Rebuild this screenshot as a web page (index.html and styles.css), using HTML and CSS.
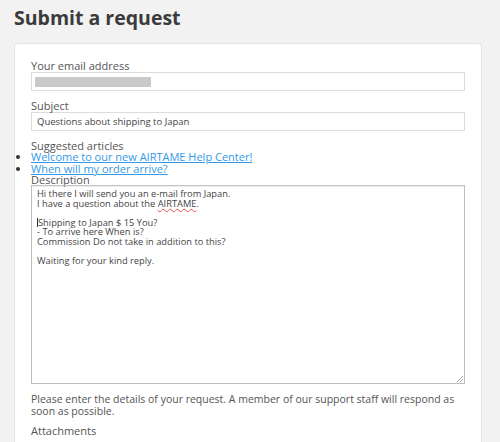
FILE: index.html
```html
<!DOCTYPE html>
<html lang="en">

<head>
  <meta charset="UTF-8">
  <meta name="viewport" content="width=device-width, initial-scale=1.0">
  <title>Submit a request</title>
  <link rel="stylesheet" href="styles.css">
</head>

<body>
  <h1>Submit a request</h1>
  <div class="request-card">
    <div class="field">
      <label>Your email address</label>
      <div class="input"><span class="hidden-email"></span></div>
    </div>
    <div class="field">
      <label>Subject</label>
      <div class="input">Questions about shipping to Japan</div>
    </div>
    <div class="suggested">
      <div class="suggested-title">Suggested articles</div>
      <ul>
        <li><a href="#">Welcome to our new AIRTAME Help Center!</a></li>
        <li><a href="#">When will my order arrive?</a></li>
      </ul>
    </div>
    <label class="desc-label">Description</label>
    <div class="textarea">
      <div>Hi there I will send you an e-mail from Japan.</div>
      <div>I have a question about the <span class="typo">AIRTAME</span>.</div>
      <div>&nbsp;</div>
      <div><span class="caret"></span>Shipping to Japan $ 15 You?</div>
      <div>- To arrive here When is?</div>
      <div>Commission Do not take in addition to this?</div>
      <div>&nbsp;</div>
      <div>Waiting for your kind reply.</div>
      <span class="grip"></span>
    </div>
    <p class="hint">Please enter the details of your request. A member of our support staff will respond as soon as possible.</p>
    <label class="attach-label">Attachments</label>
    <div class="dropzone"></div>
  </div>
</body>

</html>
```

FILE: styles.css
```css
body {
  margin: 0;
  padding: 0 14px;
  background-color: #f2f2f2;
  font-family: 'Open Sans', sans-serif;
  color: #555;
  overflow: hidden;
}

h1 {
  margin: 5px 0 12px;
  font-size: 19.5px;
  line-height: 26px;
  font-weight: 700;
  color: #3b3b3b;
}

.request-card {
  width: 434px;
  height: 382px;
  padding: 16px 16px 0;
  background-color: #fff;
  border: 1px solid #e4e4e4;
  border-bottom: none;
  border-radius: 3px 3px 0 0;
}

label,
.suggested-title {
  display: block;
  font-size: 11px;
  line-height: 12px;
}

.field {
  margin-bottom: 9px;
}

.input {
  height: 17px;
  border: 1px solid #dcdcdc;
  font-size: 9.5px;
  line-height: 17px;
  padding: 0 5px;
  color: #444;
  display: flex;
  align-items: center;
}

.hidden-email {
  width: 116px;
  height: 10px;
  background-color: #c9c9c9;
  margin-left: -2px;
}

.suggested-title {
  line-height: 11px;
}

ul {
  margin: 0;
  padding: 0;
}

li {
  font-size: 11px;
  line-height: 12px;
  color: #333;
}

a {
  color: #3399e6;
}

.desc-label {
  line-height: 10px;
}

.textarea {
  position: relative;
  height: 191px;
  border: 1px solid #bdbdbd;
  border-top-color: #c4c4c4;
  box-shadow: inset 0 1px 1px rgba(0, 0, 0, 0.08);
  padding: 3px 5px;
  font-size: 9.3px;
  line-height: 9.6px;
  color: #444;
}

.typo {
  text-decoration: underline wavy #e05050;
  text-decoration-thickness: 1px;
}

.caret {
  display: inline-block;
  width: 1px;
  height: 9px;
  background-color: #333;
  vertical-align: -1px;
}

.grip {
  position: absolute;
  right: 1px;
  bottom: 1px;
  width: 6px;
  height: 6px;
  background: linear-gradient(135deg, transparent 45%, #aaa 45%, #aaa 55%, transparent 55%, transparent 70%, #aaa 70%, #aaa 80%, transparent 80%);
}

.hint {
  margin: 9px 0 8px;
  font-size: 10.5px;
  line-height: 12px;
}

.dropzone {
  margin-top: 5px;
  border-top: 1px dashed #e6e6e6;
}
```
